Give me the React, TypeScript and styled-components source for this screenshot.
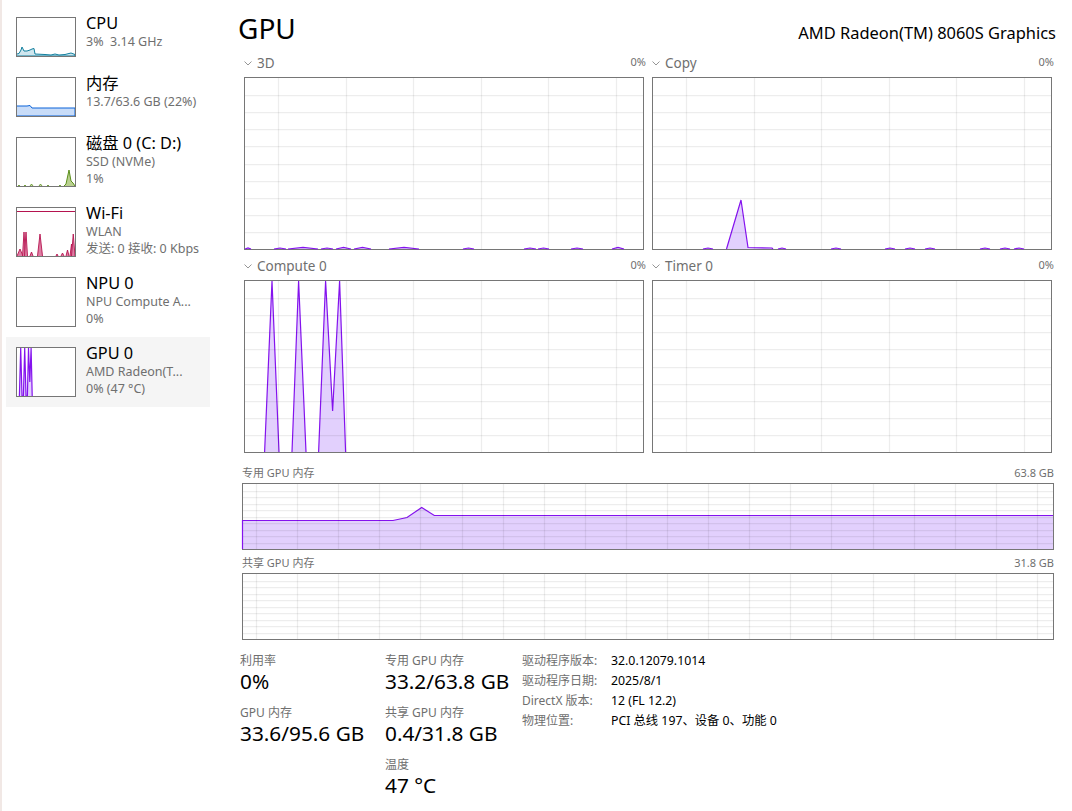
import { ReactNode } from 'react';
import styled, { createGlobalStyle } from 'styled-components';

type Pt = [number, number];
type Bump = [number, number, number];

const PURPLE = '#8412ee';
const PURPLE_FILL = '#e2d0fd';
const FONT = `"Noto Sans", "Noto Sans CJK SC", sans-serif`;
const ENGINE_H = 171;

const bumps = (list: Bump[], h: number) =>
  list.map(([a, b, top]) => [[a, h], [(a + b) / 2, h - top], [b, h]] as Pt[]);

const toPoints = (pts: Pt[]) => pts.map((p) => p.join(',')).join(' ');

function Area({ pts, stroke, fill, width = 1.2, closeAt }: { pts: Pt[]; stroke: string; fill: string; width?: number; closeAt?: number }) {
  const closed: Pt[] = closeAt === undefined ? pts : [...pts, [pts[pts.length - 1][0], closeAt], [pts[0][0], closeAt]];
  return (
    <>
      <polygon points={toPoints(closed)} fill={fill} />
      <polyline points={toPoints(pts)} fill="none" stroke={stroke} strokeWidth={width} />
    </>
  );
}

type ChartProps = {
  w: number;
  h: number;
  xStart: number;
  xStep: number;
  rows: number;
  shapes?: Pt[][];
};

function Chart({ w, h, xStart, xStep, rows, shapes = [] }: ChartProps) {
  const xs: number[] = [];
  for (let x = xStart; x < w; x += xStep) xs.push(Math.round(x) + 0.5);
  const ys: number[] = [];
  for (let i = 1; i < rows; i++) ys.push(Math.round((i * h) / rows) + 0.5);
  return (
    <ChartBox $w={w} $h={h}>
      <svg width={w} height={h} viewBox={`0 0 ${w} ${h}`}>
        {shapes.map((s, i) => (
          <Area key={i} pts={s} stroke={PURPLE} fill={PURPLE_FILL} closeAt={h} />
        ))}
        {xs.map((x) => (
          <line key={x} x1={x} x2={x} y1={0} y2={h} stroke="#000" strokeOpacity={0.07} strokeWidth={1.25} />
        ))}
        {ys.map((y) => (
          <line key={y} x1={0} x2={w} y1={y} y2={y} stroke="#000" strokeOpacity={0.07} strokeWidth={1.25} />
        ))}
      </svg>
    </ChartBox>
  );
}

function Chevron() {
  return (
    <svg width="8" height="5" viewBox="0 0 8 5">
      <path d="M0.5 0.5 L4 4 L7.5 0.5" fill="none" stroke="#8a8a8a" strokeWidth="0.9" />
    </svg>
  );
}

function Engine({ name, children }: { name: string; children: ReactNode }) {
  return (
    <section>
      <EngineHead>
        <EngineName>
          <Chevron />
          <span>{name}</span>
        </EngineName>
        <Percent>0%</Percent>
      </EngineHead>
      {children}
    </section>
  );
}

function SideItem({ title, lines, h, active, children }: { title: string; lines: string[]; h: number; active?: boolean; children?: ReactNode }) {
  return (
    <Item $active={active}>
      <Thumb $h={h}>
        <svg width="58" height={h - 2} viewBox={`0 0 58 ${h - 2}`}>
          {children}
        </svg>
      </Thumb>
      <ItemText>
        <ItemTitle>{title}</ItemTitle>
        {lines.map((l) => (
          <ItemSub key={l}>{l}</ItemSub>
        ))}
      </ItemText>
    </Item>
  );
}

const cpuPts: Pt[] = [[0, 36], [2, 35.5], [4, 32], [5, 29], [7, 33], [10, 33], [13, 32], [15, 31], [17, 30.5], [18, 36], [28, 36.5], [34, 37], [38, 36], [42, 37], [48, 36.5], [54, 35], [58, 36.5], [58, 38], [0, 38]];
const memPts: Pt[] = [[0, 28], [10, 28], [13, 27.5], [15, 30], [58, 30], [58, 38], [0, 38]];
const diskSpike: Pt[] = [[47, 48], [49, 46], [52, 32], [54, 43], [56, 45], [58, 48]];
const wifiBumps: Bump[] = [[0, 6, 7], [5.5, 8.5, 24], [7.5, 10.5, 24], [13, 16, 4], [20.5, 25.5, 22], [39, 41, 2], [44, 47, 3], [49, 52, 6], [53, 56, 12], [54.5, 58, 22]];
const gpuPts: Pt[] = [[2.4, 48], [3.7, 0], [5, 48], [6.4, 48], [7.7, 0], [9, 48], [10.4, 48], [11.5, 0], [12.8, 34], [14.1, 0], [15.2, 48]];

const engine3d: Bump[] = [[0, 6, 1], [29, 41, 1], [43, 73, 1.6], [76, 88, 1], [91, 106, 1.6], [109, 126, 1.6], [144, 174, 1.6], [218, 229, 1], [279, 291, 1], [293, 304, 1], [326, 338, 1], [367, 379, 1.6]];
const engineCopy: Bump[] = [[50, 60, 1], [125, 133, 1], [178, 188, 1], [232, 242, 1], [252, 262, 1], [272, 282, 1], [327, 337, 1], [347, 357, 1], [361, 371, 1]];
const copyPeak: Pt[] = [[73.5, ENGINE_H], [88, 122], [95, 169.5], [119, 170], [120, ENGINE_H]];
const computePeaks: Pt[][] = [
  [[19.6, ENGINE_H], [27, 0], [34, ENGINE_H]],
  [[47, ENGINE_H], [53.6, 0], [61, ENGINE_H]],
  [[73.6, ENGINE_H], [80.6, 0], [87.6, 130], [94.6, 0], [100.6, ENGINE_H]],
];
const memPeak: Pt[] = [[-0.5, 65], [-0.5, 36.5], [150, 36.5], [164, 33.5], [178.7, 23.5], [191.3, 31.5], [810, 31.5]];

export default function App() {
  return (
    <>
      <GlobalStyle />
      <Root>
        <Sidebar>
          <SideItem title="CPU" lines={['3%  3.14 GHz']} h={40}>
            <Area pts={cpuPts} stroke="#117f9e" fill="#cfe6ee" width={1} />
          </SideItem>
          <SideItem title="内存" lines={['13.7/63.6 GB (22%)']} h={40}>
            <Area pts={memPts} stroke="#0a62d8" fill="#c8dcf8" width={1} />
          </SideItem>
          <SideItem title="磁盘 0 (C: D:)" lines={['SSD (NVMe)', '1%']} h={50}>
            {bumps([[1, 3, 1], [7, 9, 1], [13, 16, 2], [22, 25, 2], [30, 32, 1], [42, 44, 1]], 48).map((s, i) => (
              <Area key={i} pts={s} stroke="#5b8f1b" fill="#c6d9a8" width={0.8} />
            ))}
            <Area pts={diskSpike} stroke="#5b8f1b" fill="#b9d08f" width={1} />
          </SideItem>
          <SideItem title="Wi-Fi" lines={['WLAN', '发送: 0 接收: 0 Kbps']} h={50}>
            <line x1="0" x2="58" y1="3.5" y2="3.5" stroke="#b5134f" />
            {bumps(wifiBumps, 48).map((s, i) => (
              <Area key={i} pts={s} stroke="#b5134f" fill="#dd7ea3" width={0.9} />
            ))}
          </SideItem>
          <SideItem title="NPU 0" lines={['NPU Compute A...', '0%']} h={50} />
          <SideItem title="GPU 0" lines={['AMD Radeon(T...', '0% (47 °C)']} h={50} active>
            <Area pts={gpuPts} stroke={PURPLE} fill={PURPLE_FILL} />
          </SideItem>
        </Sidebar>
        <Main>
          <Header>
            <PageTitle>GPU</PageTitle>
            <AdapterName>AMD Radeon(TM) 8060S Graphics</AdapterName>
          </Header>
          <EngineGrid>
            <Engine name="3D">
              <Chart w={398} h={ENGINE_H} xStart={33} xStep={67.6} rows={10} shapes={bumps(engine3d, ENGINE_H)} />
            </Engine>
            <Engine name="Copy">
              <Chart w={398} h={ENGINE_H} xStart={33} xStep={67.6} rows={10} shapes={[copyPeak, ...bumps(engineCopy, ENGINE_H)]} />
            </Engine>
            <Engine name="Compute 0">
              <Chart w={398} h={ENGINE_H} xStart={33} xStep={67.6} rows={10} shapes={computePeaks} />
            </Engine>
            <Engine name="Timer 0">
              <Chart w={398} h={ENGINE_H} xStart={33} xStep={67.6} rows={10} />
            </Engine>
          </EngineGrid>
          <MemorySection>
            <MemoryHead>
              <span>专用 GPU 内存</span>
              <span>63.8 GB</span>
            </MemoryHead>
            <Chart w={810} h={65} xStart={13} xStep={41.1} rows={10} shapes={[memPeak]} />
          </MemorySection>
          <MemorySection>
            <MemoryHead>
              <span>共享 GPU 内存</span>
              <span>31.8 GB</span>
            </MemoryHead>
            <Chart w={810} h={65} xStart={13} xStep={41.1} rows={10} />
          </MemorySection>
          <Stats>
            <StatColumn $w={145}>
              <Stat>
                <StatLabel>利用率</StatLabel>
                <StatValue>0%</StatValue>
              </Stat>
              <Stat>
                <StatLabel>GPU 内存</StatLabel>
                <StatValue>33.6/95.6 GB</StatValue>
              </Stat>
            </StatColumn>
            <StatColumn $w={137}>
              <Stat>
                <StatLabel>专用 GPU 内存</StatLabel>
                <StatValue>33.2/63.8 GB</StatValue>
              </Stat>
              <Stat>
                <StatLabel>共享 GPU 内存</StatLabel>
                <StatValue>0.4/31.8 GB</StatValue>
              </Stat>
              <Stat>
                <StatLabel>温度</StatLabel>
                <StatValue>47 °C</StatValue>
              </Stat>
            </StatColumn>
            <DriverTable>
              <DriverKey>驱动程序版本:</DriverKey>
              <DriverValue>32.0.12079.1014</DriverValue>
              <DriverKey>驱动程序日期:</DriverKey>
              <DriverValue>2025/8/1</DriverValue>
              <DriverKey>DirectX 版本:</DriverKey>
              <DriverValue>12 (FL 12.2)</DriverValue>
              <DriverKey>物理位置:</DriverKey>
              <DriverValue>PCI 总线 197、设备 0、功能 0</DriverValue>
            </DriverTable>
          </Stats>
        </Main>
      </Root>
    </>
  );
}

const GlobalStyle = createGlobalStyle`
  html, body {
    margin: 0;
    padding: 0;
    background: #fff;
    font-family: ${FONT};
  }
`;
const Root = styled.div`
  display: flex;
  width: 1072px;
  height: 811px;
  box-sizing: border-box;
  border-left: 2px solid #f1e8e5;
  overflow: hidden;
`;
const Sidebar = styled.nav`
  flex: none;
  width: 208px;
  padding: 7px 0 0 4px;
  box-sizing: border-box;
`;
const Item = styled.div<{ $active?: boolean }>`
  display: flex;
  gap: 10px;
  padding: 10px;
  background: ${(p) => (p.$active ? '#f5f5f5' : 'transparent')};
`;
const Thumb = styled.div<{ $h: number }>`
  flex: none;
  width: 60px;
  height: ${(p) => p.$h}px;
  box-sizing: border-box;
  border: 1px solid #767676;
  background: #fff;
  svg {
    display: block;
  }
`;
const ItemText = styled.div`
  margin-top: -4px;
  min-width: 0;
`;
const ItemTitle = styled.div`
  font-size: 16.3px;
  line-height: 20px;
  color: #000;
  white-space: nowrap;
`;
const ItemSub = styled.div`
  font-size: 12.5px;
  line-height: 17px;
  color: #6f6f6f;
  white-space: pre;
`;
const Main = styled.main`
  flex: 1;
  min-width: 0;
  padding-left: 28px;
  padding-right: 16px;
`;
const Header = styled.header`
  display: flex;
  justify-content: space-between;
  align-items: flex-start;
  height: 47px;
  box-sizing: border-box;
  padding-top: 9px;
`;
const PageTitle = styled.h1`
  margin: 0;
  font-size: 28px;
  font-weight: 400;
  line-height: 38px;
  color: #000;
`;
const AdapterName = styled.div`
  margin-top: 13px;
  font-size: 16.45px;
  line-height: 22px;
  color: #000;
`;
const EngineGrid = styled.div`
  display: grid;
  grid-template-columns: 400px 400px;
  column-gap: 8px;
  margin-left: 6px;
`;
const EngineHead = styled.div`
  display: flex;
  justify-content: space-between;
  align-items: center;
  height: 30px;
  box-sizing: border-box;
  padding-top: 2px;
  margin-right: -2px;
`;
const EngineName = styled.div`
  display: flex;
  align-items: center;
  gap: 5px;
  font-size: 13.5px;
  color: #6f6f6f;
`;
const Percent = styled.div`
  margin-top: -3px;
  font-size: 11px;
  color: #6f6f6f;
`;
const ChartBox = styled.div<{ $w: number; $h: number }>`
  width: ${(p) => p.$w + 2}px;
  height: ${(p) => p.$h + 2}px;
  box-sizing: border-box;
  border: 1px solid #767676;
  background: #fff;
  svg {
    display: block;
    overflow: visible;
  }
`;
const MemorySection = styled.section`
  margin-left: 4px;
  width: 812px;
  & + & {
    margin-top: -7px;
  }
`;
const MemoryHead = styled.div`
  display: flex;
  justify-content: space-between;
  align-items: flex-end;
  height: 30px;
  padding-bottom: 3px;
  box-sizing: border-box;
  font-size: 11px;
  line-height: 15px;
  color: #6f6f6f;
`;
const Stats = styled.div`
  display: flex;
  margin: 13px 0 0 2px;
`;
const StatColumn = styled.div<{ $w: number }>`
  flex: none;
  width: ${(p) => p.$w}px;
  display: flex;
  flex-direction: column;
  gap: 11px;
`;
const Stat = styled.div`
  display: flex;
  flex-direction: column;
`;
const StatLabel = styled.div`
  font-size: 12px;
  line-height: 15px;
  color: #6f6f6f;
`;
const StatValue = styled.div`
  font-size: 20.8px;
  line-height: 26px;
  color: #000;
  white-space: nowrap;
`;
const DriverTable = styled.div`
  display: grid;
  grid-template-columns: 89px auto;
  grid-auto-rows: 20px;
  align-items: center;
  align-self: flex-start;
  margin-top: -3px;
`;
const DriverKey = styled.div`
  font-size: 12px;
  color: #6f6f6f;
  white-space: nowrap;
`;
const DriverValue = styled.div`
  font-size: 12.3px;
  color: #000;
  white-space: nowrap;
`;
